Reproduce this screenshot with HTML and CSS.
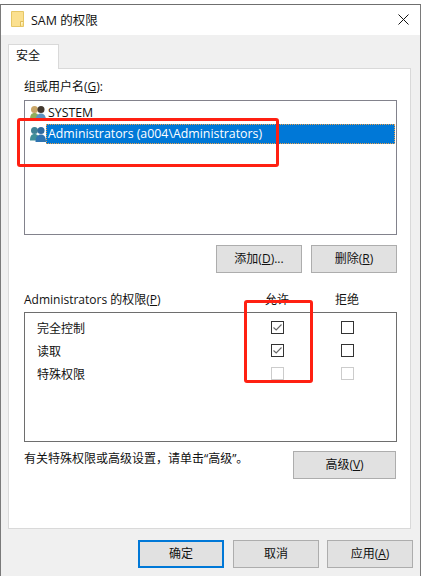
FILE: index.html
```html
<!DOCTYPE HTML>
<html>

<head>
    <meta charset="utf-8">
    <title>SAM 的权限</title>
    <link rel="stylesheet" href="styles.css">
</head>

<body>
    <div class="window">
        <div class="titlebar">
            <svg class="folder" width="13" height="16" viewBox="0 0 13 16">
                <path d="M0.5 0.5H12.5V15.5H0.5Z" fill="#fbe08f" stroke="#e6c766" />
                <path d="M9.5 15.5V10.5H12.5" fill="#fff3c4" stroke="#e0bd5a" />
            </svg>
            <span class="title">SAM 的权限</span>
            <svg class="close" width="11" height="11" viewBox="0 0 11 11">
                <path d="M0.5 0.5L10.5 10.5M10.5 0.5L0.5 10.5" stroke="#111" stroke-width="1" fill="none" />
            </svg>
        </div>

        <div class="body">
            <div class="tab">安全</div>
            <div class="panel">
                <div class="label first">组或用户名(<u>G</u>):</div>
                <div class="listbox">
                    <div class="user">
                        <svg class="usericon" width="16" height="16" viewBox="0 0 16 16">
                            <circle cx="4.5" cy="4.5" r="3.5" fill="#c9a566" />
                            <path d="M0 14.5C0 10 1.500 8 4.500 8S9 10 9 14.500Z" fill="#8fae5c" />
                            <circle cx="11" cy="4.500" r="3.500" fill="#43382e" />
                            <path d="M5.500 16C5.500 10.500 8 8.500 11 8.500S16 10.500 16 16Z" fill="#5f93c2" />
                        </svg>
                        <span class="username">SYSTEM</span>
                    </div>
                    <div class="user">
                        <svg class="usericon" width="16" height="16" viewBox="0 0 16 16">
                            <circle cx="4.500" cy="4.500" r="3.500" fill="#3f8296" />
                            <path d="M0 14.500C0 10 1.500 8 4.500 8S9 10 9 14.500Z" fill="#3f8f98" />
                            <circle cx="11" cy="4.500" r="3.500" fill="#2f6a9e" />
                            <path d="M5.500 16C5.500 10.500 8 8.500 11 8.500S16 10.500 16 16Z" fill="#2f74b0" />
                        </svg>
                        <span class="username selected">Administrators (a004\Administrators)</span>
                    </div>
                </div>
                <div class="listbuttons">
                    <div class="button">添加(<u>D</u>)...</div>
                    <div class="button">删除(<u>R</u>)</div>
                </div>

                <div class="permhead">
                    <div class="permlabel">Administrators 的权限(<u>P</u>)</div>
                    <div class="col">允许</div>
                    <div class="col">拒绝</div>
                </div>
                <div class="permbox">
                    <div class="perm">
                        <div class="permname">完全控制</div>
                        <div class="col"><span class="check">
                                <svg width="11" height="11" viewBox="0 0 11 11"><path d="M1.5 5.5L4.2 8L9.5 2.5" fill="none" stroke="#666" stroke-width="1.1" /></svg>
                            </span></div>
                        <div class="col"><span class="check"></span></div>
                    </div>
                    <div class="perm">
                        <div class="permname">读取</div>
                        <div class="col"><span class="check">
                                <svg width="11" height="11" viewBox="0 0 11 11"><path d="M1.5 5.5L4.2 8L9.5 2.5" fill="none" stroke="#666" stroke-width="1.1" /></svg>
                            </span></div>
                        <div class="col"><span class="check"></span></div>
                    </div>
                    <div class="perm">
                        <div class="permname">特殊权限</div>
                        <div class="col"><span class="check off"></span></div>
                        <div class="col"><span class="check off"></span></div>
                    </div>
                </div>

                <div class="advanced">
                    <div class="note">有关特殊权限或高级设置，请单击“高级”。</div>
                    <div class="button wide">高级(<u>V</u>)</div>
                </div>
            </div>

            <div class="footer">
                <div class="button default">确定</div>
                <div class="button">取消</div>
                <div class="button">应用(<u>A</u>)</div>
            </div>
        </div>
    </div>

    <!-- red marks drawn on top of the screenshot -->
    <div class="mark mark-user"></div>
    <div class="mark mark-allow"></div>
</body>

</html>
```

FILE: styles.css
```css
html {
    font-family: "Open Sans", "Noto Sans CJK SC", sans-serif;
    font-size: 12px;
    color: #111;
}

body {
    margin: 0;
    height: 576px;
    overflow: hidden;
    background-color: #fff;
    position: relative;
}

u {
    text-underline-offset: 1px;
}

.window {
    margin-top: 4px;
    height: 572px;
    box-sizing: border-box;
    border-top: 1px solid #6f6f6f;
    border-left: 1px solid #7a7a7a;
    border-right: 1px solid #7a7a7a;
    display: flex;
    flex-direction: column;
}

.titlebar {
    height: 30px;
    flex: none;
    display: flex;
    align-items: center;
    padding-left: 10px;
    padding-right: 11px;
    padding-bottom: 2px;
    box-sizing: border-box;
    background-color: #fff;
}

.title {
    margin-left: 7px;
    font-size: 12.5px;
    flex: 1;
}

.body {
    flex: 1;
    background-color: #f0f0f0;
    padding: 9px 9px 0 7px;
    display: flex;
    flex-direction: column;
}

.tab {
    width: 51px;
    height: 25px;
    box-sizing: border-box;
    margin-bottom: -1px;
    padding-left: 7px;
    line-height: 22px;
    background-color: #fff;
    border: 1px solid #d9d9d9;
    border-bottom: none;
    position: relative;
    font-size: 12px;
}

.panel {
    height: 461px;
    box-sizing: border-box;
    background-color: #fff;
    border: 1px solid #d9d9d9;
    padding: 0 13px 0 15px;
}

.label.first {
    height: 31px;
    line-height: 35px;
}

.listbox {
    height: 135px;
    box-sizing: border-box;
    border: 1px solid #82828c;
    padding: 1px 1px 0 5px;
}

.user {
    height: 21px;
    display: flex;
    align-items: center;
}

.usericon {
    flex: none;
}

.username {
    padding: 0 2px;
    flex: 1;
    line-height: 20px;
    font-size: 12.35px;
}

.selected {
    background-color: #0078d7;
    color: #fff;
    outline: 1px dotted #e8a04c;
    outline-offset: -1px;
}

.listbuttons {
    display: flex;
    justify-content: flex-end;
    gap: 9px;
    margin-top: 10px;
}

.button {
    width: 86px;
    height: 28px;
    box-sizing: border-box;
    background-color: #e1e1e1;
    border: 1px solid #adadad;
    text-align: center;
    line-height: 25px;
}

.button.default {
    border: 2px solid #0078d7;
    line-height: 23px;
    margin-right: 1px;
}

.button.wide {
    width: 103px;
    margin-right: 1px;
}

.permhead {
    display: flex;
    align-items: center;
    height: 27px;
    margin-top: 12px;
    padding-right: 15px;
}

.permlabel {
    flex: 1;
}

.col {
    width: 70px;
    text-align: center;
    display: flex;
    justify-content: center;
    align-items: center;
}

.permbox {
    height: 130px;
    box-sizing: border-box;
    border: 1px solid #6e6e6e;
    padding: 3px 14px 0 12px;
}

.perm {
    display: flex;
    align-items: center;
    height: 23px;
}

.permname {
    flex: 1;
}

.check {
    width: 13px;
    height: 13px;
    box-sizing: border-box;
    border: 1px solid #333;
    background-color: #fff;
    display: flex;
    align-items: center;
    justify-content: center;
}

.check.off {
    border-color: #ccc;
}

.advanced {
    display: flex;
    align-items: flex-start;
    margin-top: 9px;
}

.note {
    flex: 1;
    line-height: 16px;
}

.footer {
    display: flex;
    justify-content: flex-end;
    gap: 8px;
    margin-top: 11px;
    margin-right: -2px;
}

.mark {
    position: absolute;
    box-sizing: border-box;
    border: 3px solid #ff2012;
    border-radius: 3px;
}

.mark-user {
    left: 17px;
    top: 118px;
    width: 262px;
    height: 49px;
}

.mark-allow {
    left: 244px;
    top: 300px;
    width: 69px;
    height: 83px;
}
```
